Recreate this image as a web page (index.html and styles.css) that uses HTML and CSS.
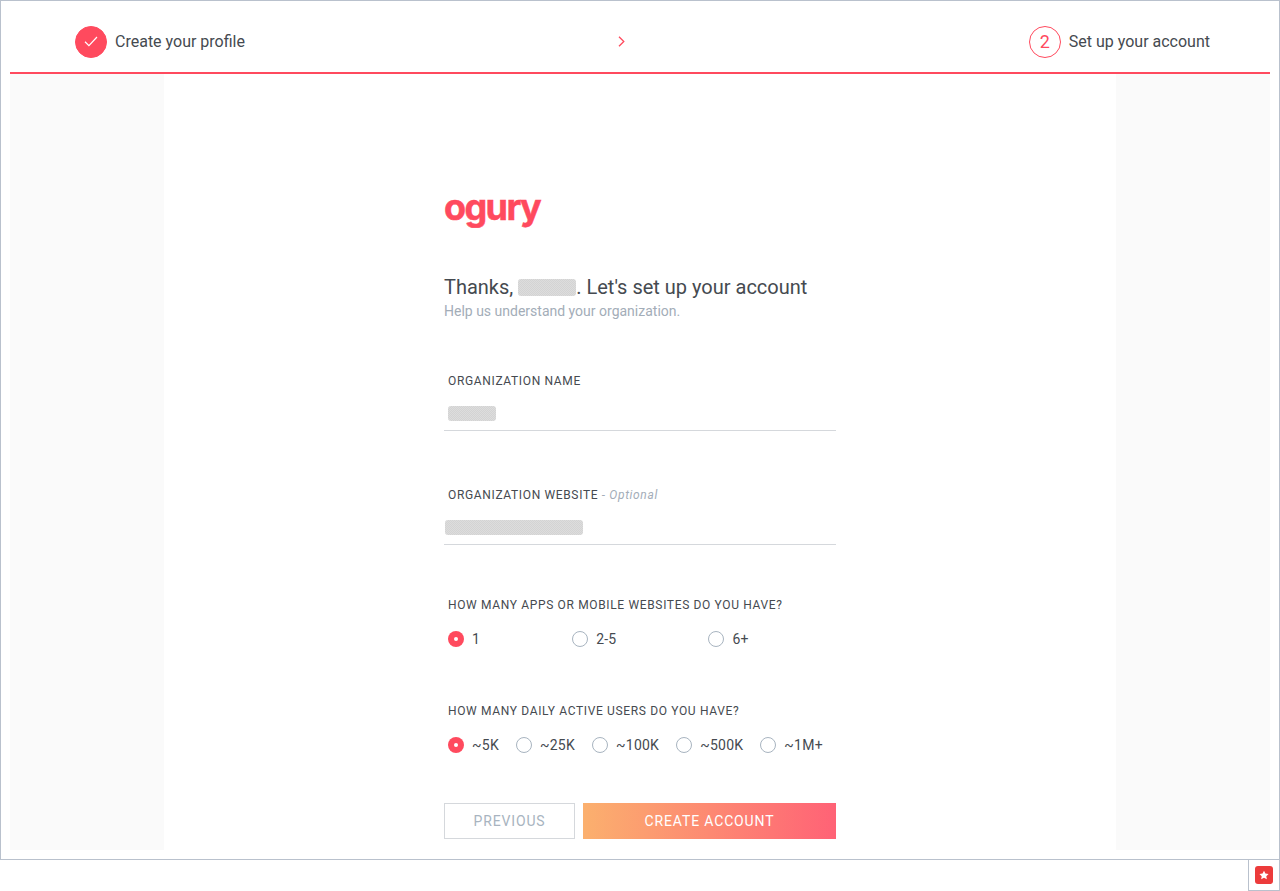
FILE: index.html
```html
<!DOCTYPE html>
<html lang="en">
<head>
    <meta charset="UTF-8">
    <meta name="viewport" content="width=device-width, initial-scale=1.0">
    <title>Ogury - Set up your account</title>
    <link rel="stylesheet" href="styles.css">
</head>
<body>
    <div class="frame">
        <header class="steps">
            <div class="step">
                <span class="step-badge done">
                    <svg width="14" height="11" viewBox="0 0 14 11" fill="none"><path d="M1 5.8 L4.9 9.6 L13 1" stroke="#fff" stroke-width="1.2"/></svg>
                </span>
                <span>Create your profile</span>
            </div>
            <svg class="chevron" width="7" height="11" viewBox="0 0 7 11" fill="none"><path d="M1 0.7 L5.8 5.5 L1 10.3" stroke="#ff4a5e" stroke-width="1.3"/></svg>
            <div class="step">
                <span class="step-badge">2</span>
                <span>Set up your account</span>
            </div>
        </header>

        <main class="backdrop">
            <div class="panel">
                <form class="signup">
                    <div class="logo">ogury</div>
                    <h1 class="title">Thanks, <span class="blur blur-name"></span>. Let's set up your account</h1>
                    <p class="subtitle">Help us understand your organization.</p>

                    <div class="field field-first">
                        <label class="label">Organization name</label>
                        <div class="input"><span class="blur blur-org"></span></div>
                    </div>

                    <div class="field">
                        <label class="label">Organization website <em class="optional">- Optional</em></label>
                        <div class="input input-flush"><span class="blur blur-site"></span></div>
                    </div>

                    <div class="group group-apps">
                        <div class="label">How many apps or mobile websites do you have?</div>
                        <div class="radios radios-wide">
                            <div class="radio"><span class="dot on"></span>1</div>
                            <div class="radio"><span class="dot"></span>2-5</div>
                            <div class="radio"><span class="dot"></span>6+</div>
                        </div>
                    </div>

                    <div class="group group-users">
                        <div class="label">How many daily active users do you have?</div>
                        <div class="radios">
                            <div class="radio"><span class="dot on"></span>~5K</div>
                            <div class="radio"><span class="dot"></span>~25K</div>
                            <div class="radio"><span class="dot"></span>~100K</div>
                            <div class="radio"><span class="dot"></span>~500K</div>
                            <div class="radio"><span class="dot"></span>~1M+</div>
                        </div>
                    </div>

                    <div class="actions">
                        <button type="button" class="btn btn-prev">Previous</button>
                        <button type="button" class="btn btn-create">Create account</button>
                    </div>
                </form>
            </div>
        </main>
    </div>

    <footer class="footer">
        <div class="corner">
            <span class="corner-icon">
                <svg width="10" height="10" viewBox="0 0 24 24"><path d="M12 1.5 L15.4 8.3 L23 9.4 L17.5 14.8 L18.8 22.4 L12 18.8 L5.2 22.4 L6.5 14.8 L1 9.4 L8.6 8.3 Z" fill="#fff"/></svg>
            </span>
        </div>
    </footer>
</body>
</html>
```

FILE: styles.css
```css
body, html {
    margin: 0;
    padding: 0;
    background-color: #fff;
    font-family: Roboto, "Liberation Sans", sans-serif;
    color: #454a50;
}
.frame {
    box-sizing: border-box;
    height: 860px;
    padding: 0 9px 9px;
    border: 1px solid #b9c1cd;
    overflow: hidden;
    display: flex;
    flex-direction: column;
}
.steps {
    box-sizing: border-box;
    height: 73px;
    flex: none;
    padding: 10px 60px 0 65px;
    border-bottom: 2px solid #ff4a5e;
    display: flex;
    align-items: center;
    justify-content: space-between;
    font-size: 16px;
}
.step {
    display: flex;
    align-items: center;
    gap: 8px;
}
.step-badge {
    box-sizing: border-box;
    width: 32px;
    height: 32px;
    border: 1px solid #ff4a5e;
    border-radius: 50%;
    color: #ff4a5e;
    font-size: 18px;
    display: flex;
    align-items: center;
    justify-content: center;
}
.step-badge.done {
    background-color: #ff4a5e;
}
.chevron {
    margin-right: 30px;
}
.backdrop {
    flex: 1;
    background-color: #fafafa;
    display: flex;
    justify-content: center;
    min-height: 0;
}
.panel {
    width: 952px;
    background-color: #fff;
    display: flex;
    justify-content: center;
}
.signup {
    width: 392px;
    padding-top: 112px;
}
.logo {
    height: 46px;
    line-height: 42px;
    font-family: Inter, Roboto, sans-serif;
    font-size: 36px;
    font-weight: 700;
    letter-spacing: -1.6px;
    -webkit-text-stroke: 0.5px #ff4a5e;
    color: #ff4a5e;
}
.title {
    margin: 43px 0 0;
    font-size: 20px;
    font-weight: 400;
    line-height: 24px;
    display: flex;
    align-items: center;
    white-space: pre;
}
.subtitle {
    margin: 4px 0 0;
    font-size: 14px;
    line-height: 16px;
    color: #a3adb8;
}
.blur {
    display: block;
    height: 15px;
    border-radius: 3px;
    background: repeating-conic-gradient(#d3d3d3 0 25%, #dddddd 0 50%) 0 0 / 2px 2px;
}
.blur-name {
    width: 58px;
    height: 17px;
}
.blur-org {
    width: 48px;
    margin-left: 4px;
}
.blur-site {
    width: 138px;
    margin-left: 1px;
}
.label {
    display: block;
    padding-left: 4px;
    font-size: 12px;
    line-height: 14px;
    letter-spacing: 0.65px;
    text-transform: uppercase;
}
.optional {
    text-transform: none;
    color: #a3adb8;
}
.field {
    margin-top: 57px;
}
.field-first {
    margin-top: 55px;
}
.input {
    box-sizing: border-box;
    height: 39px;
    margin-top: 4px;
    padding-top: 14px;
    border-bottom: 1px solid #d5d8dc;
}
.group-apps {
    margin-top: 53px;
}
.group-users {
    margin-top: 57px;
}
.radios {
    margin-top: 19px;
    padding-left: 4px;
    display: flex;
    gap: 17px;
}
.radios-wide {
    gap: 92px;
}
.radio {
    display: flex;
    align-items: center;
    gap: 8px;
    font-size: 14px;
    line-height: 16px;
    letter-spacing: 0.25px;
}
.dot {
    box-sizing: border-box;
    width: 16px;
    height: 16px;
    border: 1px solid #a8b4c0;
    border-radius: 50%;
    display: flex;
    align-items: center;
    justify-content: center;
}
.dot.on {
    border: none;
    background-color: #ff4a5e;
}
.dot.on::after {
    content: "";
    width: 4px;
    height: 4px;
    border-radius: 50%;
    background-color: #fff;
}
.actions {
    margin-top: 50px;
    display: flex;
    gap: 8px;
}
.btn {
    height: 36px;
    padding: 0;
    border: none;
    font-family: inherit;
    font-size: 14px;
    letter-spacing: 0.85px;
    text-transform: uppercase;
    cursor: pointer;
}
.btn-prev {
    width: 131px;
    background-color: #fff;
    border: 1px solid #d5d8dc;
    color: #a8b4c0;
}
.btn-create {
    width: 253px;
    background-image: linear-gradient(90deg, #fbb06e, #ff6276);
    color: #fff;
}
.footer {
    height: 31px;
    display: flex;
    justify-content: flex-end;
}
.corner {
    box-sizing: border-box;
    width: 32px;
    height: 31px;
    border-left: 1px solid #b9c1cd;
    border-right: 1px solid #b9c1cd;
    border-bottom: 1px solid #b9c1cd;
    display: flex;
    align-items: center;
    justify-content: center;
}
.corner-icon {
    width: 18px;
    height: 18px;
    border-radius: 3px;
    background-color: #ec3b3b;
    display: flex;
    align-items: center;
    justify-content: center;
}
```
